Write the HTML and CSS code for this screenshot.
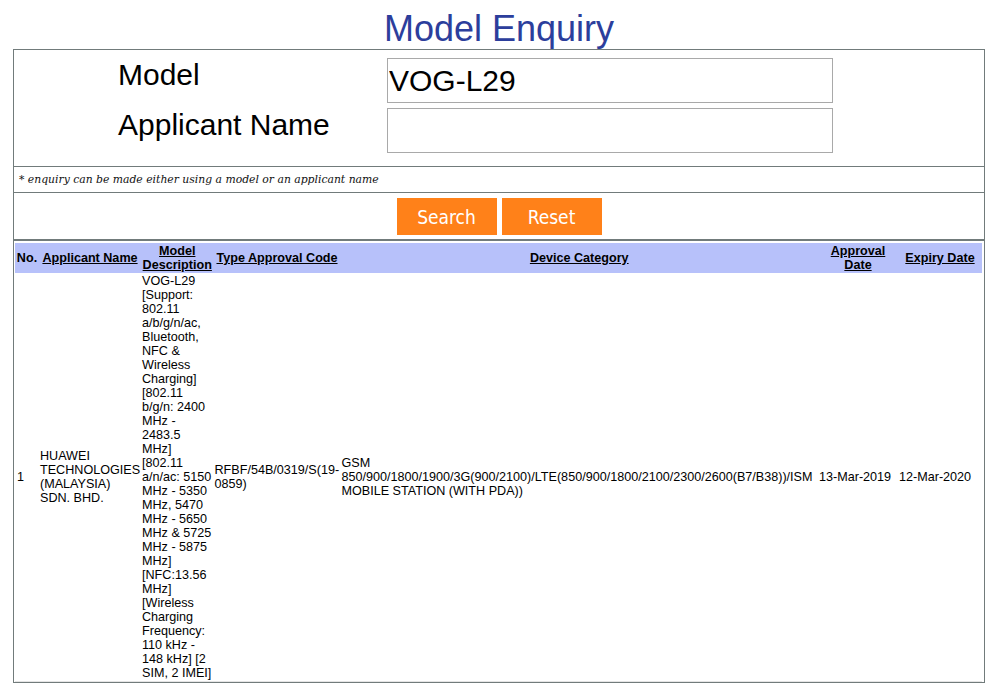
FILE: index.html
```html
<!DOCTYPE html>
<html>
<head>
<meta charset="utf-8">
<title>Model Enquiry</title>
<link rel="stylesheet" href="styles.css">
</head>
<body>
<h1 class="title">Model Enquiry</h1>
<div class="box">
  <form class="form">
    <label class="label" for="model">Model</label>
    <input class="field" id="model" type="text" value="VOG-L29">
    <label class="label" for="applicant">Applicant Name</label>
    <input class="field" id="applicant" type="text" value="">
  </form>
  <div class="note">* enquiry can be made either using a model or an applicant name</div>
  <div class="actions">
    <button class="btn" type="button">Search</button>
    <button class="btn" type="button">Reset</button>
  </div>
  <table class="results">
    <colgroup>
      <col class="c-no"><col class="c-app"><col class="c-model"><col class="c-tac"><col class="c-dev"><col class="c-appr"><col class="c-exp">
    </colgroup>
    <thead>
      <tr>
        <th>No.</th>
        <th><a href="#">Applicant Name</a></th>
        <th><a href="#">Model Description</a></th>
        <th><a href="#">Type Approval Code</a></th>
        <th><a href="#">Device Category</a></th>
        <th><a href="#">Approval Date</a></th>
        <th><a href="#">Expiry Date</a></th>
      </tr>
    </thead>
    <tbody>
      <tr>
        <td>1</td>
        <td>HUAWEI TECHNOLOGIES (MALAYSIA) SDN. BHD.</td>
        <td>VOG-L29 [Support: 802.11 a/b/g/n/ac, Bluetooth, NFC &amp; Wireless Charging] [802.11 b/g/n: 2400 MHz - 2483.5 MHz] [802.11 a/n/ac: 5150 MHz - 5350 MHz, 5470 MHz - 5650 MHz &amp; 5725 MHz - 5875 MHz] [NFC:13.56 MHz] [Wireless Charging Frequency: 110 kHz - 148 kHz] [2 SIM, 2 IMEI]</td>
        <td>RFBF/54B/0319/S(19-<br>0859)</td>
        <td>GSM <span class="nowrap">850/900/1800/1900/3G(900/2100)/LTE(850/900/1800/2100/2300/2600(B7/B38))/ISM</span> MOBILE STATION (WITH PDA))</td>
        <td>13-Mar-2019</td>
        <td>12-Mar-2020</td>
      </tr>
    </tbody>
  </table>
</div>
</body>
</html>
```

FILE: styles.css
```css
body {
  margin: 8px;
  background: #ffffff;
  font-family: "Liberation Sans", Arial, sans-serif;
  color: #000;
}

.title {
  margin: 0;
  font-size: 36px;
  line-height: 41px;
  font-weight: normal;
  text-align: center;
  color: #2c3e9c;
}

.box {
  width: 972px;
  box-sizing: border-box;
  margin: 0 auto;
  border: 1px solid #717b7b;
}

.form {
  display: grid;
  grid-template-columns: 269px 446px;
  row-gap: 5px;
  margin: 0;
  padding: 8px 0 13px 104px;
  border-bottom: 1px solid #717b7b;
}

.label {
  font-size: 30px;
  line-height: 34px;
  color: #000;
}

.field {
  box-sizing: border-box;
  width: 446px;
  height: 45px;
  margin: 0;
  padding: 0 1px;
  border: 1px solid #a9a9a9;
  font-family: "Liberation Sans", Arial, sans-serif;
  font-size: 30px;
  color: #000;
  background: #fff;
  outline: none;
}

.note {
  height: 25px;
  line-height: 25px;
  padding-left: 5px;
  font-family: "DejaVu Serif", "Liberation Serif", serif;
  font-style: italic;
  font-size: 10.8px;
  color: #111;
  border-bottom: 1px solid #717b7b;
}

.actions {
  display: flex;
  justify-content: center;
  gap: 5px;
  padding: 5px 0 4px;
  border-bottom: 2px solid #717b7b;
}

.btn {
  width: 100px;
  height: 37px;
  margin: 0;
  padding: 0;
  border: none;
  background: #ff8119;
  color: #fff;
  font-family: "DejaVu Sans Condensed", "DejaVu Sans", sans-serif;
  font-size: 19px;
  cursor: pointer;
}

.results {
  width: 967px;
  margin: 2px 1px 0;
  border-collapse: collapse;
  table-layout: fixed;
  font-size: 12.6px;
  line-height: 14px;
}

.c-no { width: 24px; }
.c-app { width: 102px; }
.c-model { width: 72.5px; }
.c-tac { width: 127px; }
.c-dev { width: 477.5px; }
.c-appr { width: 80px; }
.c-exp { width: 84px; }

.results th {
  background: #b7c1fa;
  padding: 1px 1px;
  font-weight: bold;
  text-align: center;
  vertical-align: middle;
}

.results th a {
  color: #000;
  text-decoration: underline;
}

.results td {
  padding: 1px 1px;
  text-align: left;
  vertical-align: middle;
  border-bottom: 1px solid #e4e4e4;
}

.results td:first-child {
  padding-left: 2px;
}

.nowrap {
  white-space: nowrap;
}
```
